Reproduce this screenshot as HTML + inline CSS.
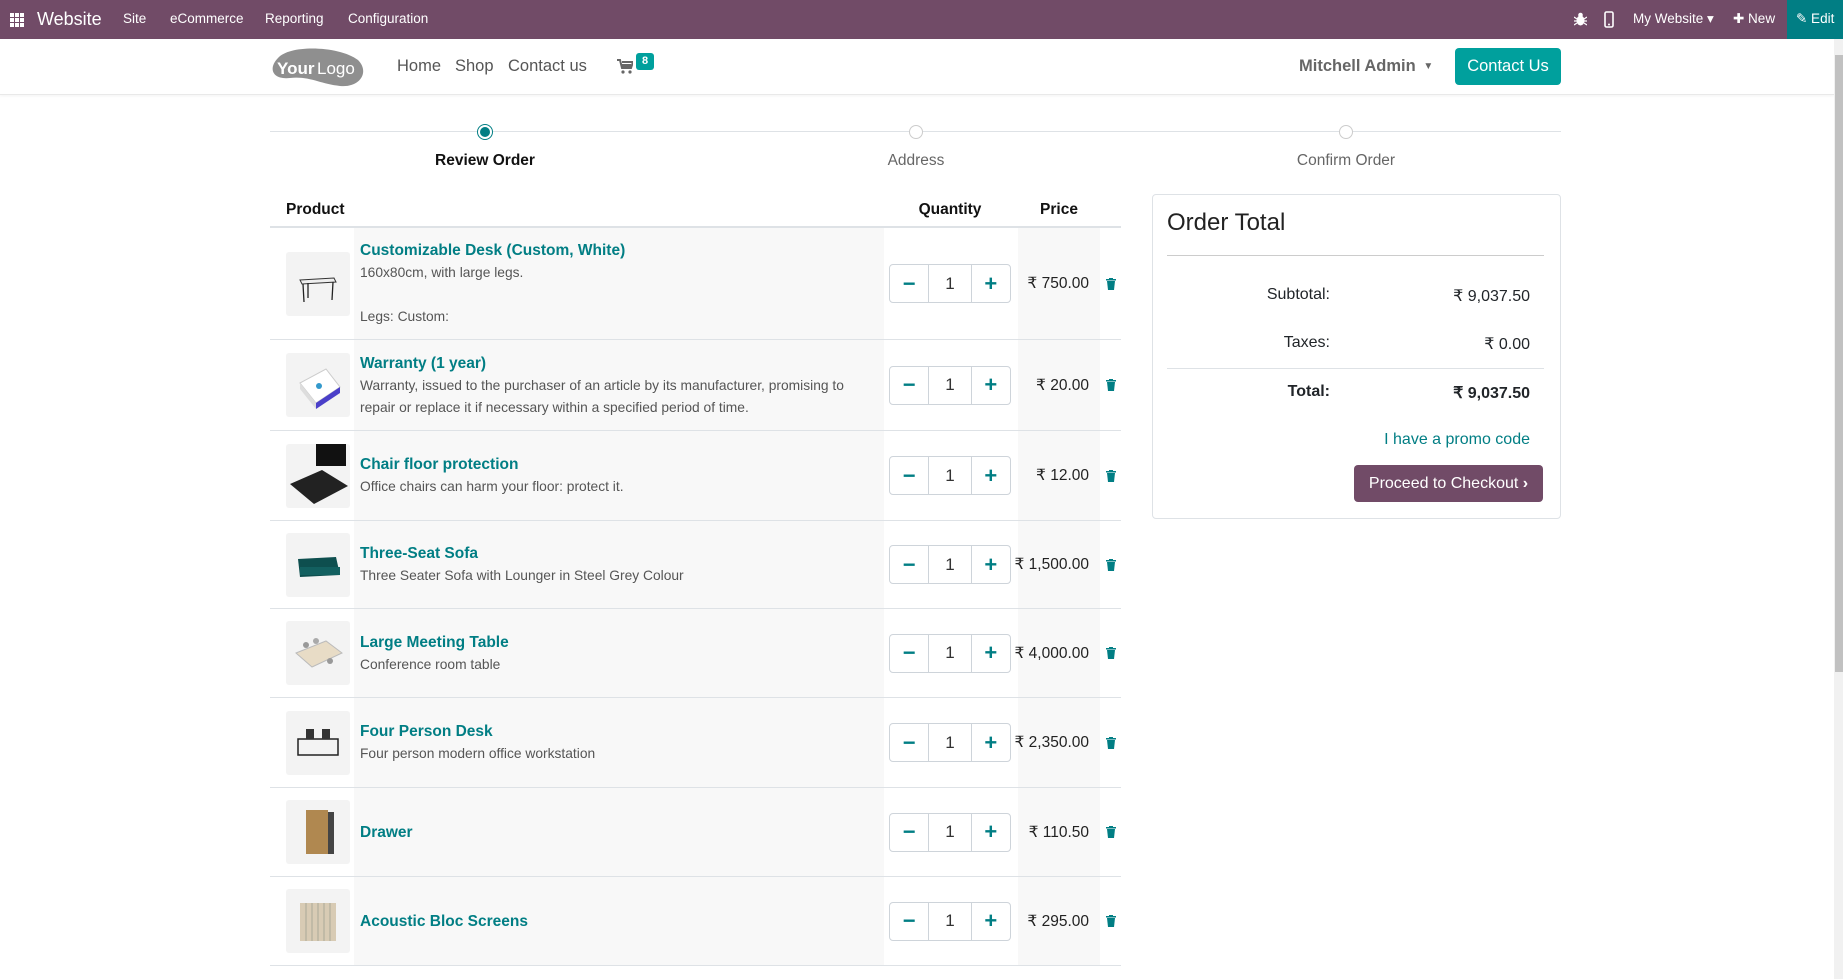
<!DOCTYPE html>
<html><head><meta charset="utf-8">
<style>
*{box-sizing:border-box;margin:0;padding:0}
body{width:1843px;height:979px;overflow:hidden;background:#fff;font-family:"Liberation Sans",Arial,sans-serif;color:#212529;position:relative}
.a{position:absolute}
.top{left:0;top:0;width:1843px;height:39px;background:#714b67;color:#fff}
.top span{position:absolute;top:11px;font-size:13.5px;white-space:nowrap}
.row{position:absolute;left:270px;width:851px;border-bottom:1px solid #dee2e6;display:flex;align-items:center}
.gp{position:absolute;left:84px;width:530px;top:0;bottom:0;background:#f8f8f8}
.gq{position:absolute;left:748px;width:82px;top:0;bottom:0;background:#f8f8f8}
.img{position:absolute;left:16px;width:64px;height:64px;background:#f3f3f3;border-radius:3px;overflow:hidden}
.txt{position:absolute;left:90px;width:520px}
.nm{color:#017e84;font-weight:bold;font-size:15.5px;line-height:23px}
.ds{color:#555;font-size:13.8px;line-height:22px}
.qty{position:absolute;left:619px;width:122px;height:39px;border:1px solid #ced4da;border-radius:4px;display:flex;background:#fff}
.qty div{display:flex;align-items:center;justify-content:center;font-size:17px}
.qty .b{width:39px;color:#017e84;font-weight:bold;font-size:22px}
.qty .v{width:44px;border-left:1px solid #ced4da;border-right:1px solid #ced4da;color:#333}
.pr{position:absolute;right:32px;font-size:15.5px;color:#222}
.tr{position:absolute;left:836px;width:10px;height:12px}
</style></head><body>
<div class="a top">
  <svg class="a" style="left:10px;top:13px" width="14" height="14" viewBox="0 0 14 14" fill="#fff"><rect x="0" y="0" width="4" height="4"/><rect x="5" y="0" width="4" height="4"/><rect x="10" y="0" width="4" height="4"/><rect x="0" y="5" width="4" height="4"/><rect x="5" y="5" width="4" height="4"/><rect x="10" y="5" width="4" height="4"/><rect x="0" y="10" width="4" height="4"/><rect x="5" y="10" width="4" height="4"/><rect x="10" y="10" width="4" height="4"/></svg>
  <span style="left:37px;top:9px;font-size:18px">Website</span>
  <span style="left:123px">Site</span>
  <span style="left:170px">eCommerce</span>
  <span style="left:265px">Reporting</span>
  <span style="left:348px">Configuration</span>
  <svg class="a" style="left:1574px;top:12px" width="13" height="14" viewBox="0 0 13 14" fill="#fff"><ellipse cx="6.5" cy="8.5" rx="4" ry="5"/><circle cx="6.5" cy="3" r="2.3"/><path d="M0 5l3 2M13 5l-3 2M0 9h3M13 9h-3M0 13l3-2M13 13l-3-2" stroke="#fff" stroke-width="1.2"/></svg>
  <svg class="a" style="left:1604px;top:11px" width="10" height="17" viewBox="0 0 10 17"><rect x="1" y="1" width="8" height="15" rx="1.5" fill="none" stroke="#fff" stroke-width="1.6"/><circle cx="5" cy="13.5" r="1" fill="#fff"/></svg>
  <span style="left:1633px">My Website ▾</span>
  <span style="left:1733px">✚ New</span>
  <div class="a" style="left:1787px;top:0;width:56px;height:39px;background:#017e84"></div>
  <span style="left:1796px">✎ Edit</span>
</div>
<div class="a" style="left:0;top:39px;width:1834px;height:56px;border-bottom:1px solid #e9e9e9;box-shadow:0 1px 3px rgba(0,0,0,.05)"></div>
<svg class="a" style="left:270px;top:46px" width="96" height="42" viewBox="0 0 96 42"><path d="M8 12 C20 -2 70 0 88 14 C100 26 90 42 70 40 C50 38 40 30 20 32 C2 34 -2 22 8 12Z" fill="#8f8f8f"/><text x="7" y="28" font-family="Liberation Sans" font-weight="bold" font-size="17" fill="#fff">Your</text><text x="47" y="28" font-family="Liberation Sans" font-size="17" fill="#fff">Logo</text></svg>
<div class="a" style="left:397px;top:57px;font-size:16.5px;color:#555">Home</div>
<div class="a" style="left:455px;top:57px;font-size:16.5px;color:#555">Shop</div>
<div class="a" style="left:508px;top:57px;font-size:16.5px;color:#555">Contact us</div>
<svg class="a" style="left:617px;top:59px" width="16" height="15" viewBox="0 0 16 15" fill="#666"><path d="M0 1h3l2 8h9l2-6H5" stroke="#666" stroke-width="2" fill="none"/><rect x="4" y="5" width="10" height="4"/><circle cx="6" cy="13" r="1.6"/><circle cx="13" cy="13" r="1.6"/></svg>
<div class="a" style="left:636px;top:53px;width:18px;height:17px;background:#00a09d;border-radius:3px;color:#fff;font-size:11px;font-weight:bold;text-align:center;line-height:17px">8</div>
<div class="a" style="left:1299px;top:57px;font-size:16.5px;color:#666;font-weight:bold">Mitchell Admin <span style="font-size:10px;position:relative;top:-2px;margin-left:3px">▼</span></div>
<div class="a" style="left:1455px;top:48px;width:106px;height:37px;background:#00a09d;border-radius:4px;color:#fff;font-size:16.5px;text-align:center;line-height:37px">Contact Us</div>
<div class="a" style="left:1834px;top:39px;width:9px;height:940px;background:#f1f1f1"></div>
<div class="a" style="left:1835px;top:55px;width:8px;height:617px;background:#c1c1c1"></div>

<div class="a" style="left:270px;top:131px;width:1291px;height:1px;background:#dee2e6"></div>
<div class="a" style="left:477px;top:124px;width:16px;height:16px;border-radius:50%;border:1px solid #017e84;background:#fff"></div>
<div class="a" style="left:480px;top:127px;width:10px;height:10px;border-radius:50%;background:#017e84"></div>
<div class="a" style="left:909px;top:125px;width:14px;height:14px;border-radius:50%;border:1px solid #ccc;background:#fff"></div>
<div class="a" style="left:1339px;top:125px;width:14px;height:14px;border-radius:50%;border:1px solid #ccc;background:#fff"></div>
<div class="a" style="left:385px;top:152px;width:200px;text-align:center;font-size:15.5px;font-weight:bold;color:#111">Review Order</div>
<div class="a" style="left:816px;top:152px;width:200px;text-align:center;font-size:15.5px;color:#666">Address</div>
<div class="a" style="left:1246px;top:152px;width:200px;text-align:center;font-size:15.5px;color:#666">Confirm Order</div>

<div class="a" style="left:286px;top:201px;font-size:15.5px;font-weight:bold;color:#111">Product</div>
<div class="a" style="left:900px;top:201px;width:100px;text-align:center;font-size:15.5px;font-weight:bold;color:#111">Quantity</div>
<div class="a" style="left:1018px;top:201px;width:82px;text-align:center;font-size:15.5px;font-weight:bold;color:#111">Price</div>
<div class="a" style="left:270px;top:226px;width:851px;height:2px;background:#dee2e6"></div>

<div class="row" style="top:228px;height:112px"><div class="gp"></div><div class="gq"></div><div class="img"><svg width="64" height="64"><path d="M14 28 L48 26 L50 30 L16 32Z" fill="#eee" stroke="#333"/><path d="M17 32 L18 50 M47 30 L46 48 M22 31 L22 46" stroke="#222" stroke-width="1.3"/></svg></div>
<div class="txt"><div class="nm">Customizable Desk (Custom, White)</div><div class="ds">160x80cm, with large legs.</div><div class="ds">&nbsp;</div><div class="ds">Legs: Custom:</div></div>
<div class="qty"><div class="b">−</div><div class="v">1</div><div class="b">+</div></div><div class="pr">₹ 750.00</div><svg class="tr" viewBox="0 0 10 12" fill="#017e84"><rect x="0" y="1" width="10" height="1.5"/><rect x="3" y="0" width="4" height="1.5"/><path d="M1 3h8l-1 9H2z"/></svg></div>

<div class="row" style="top:340px;height:91px"><div class="gp"></div><div class="gq"></div><div class="img"><svg width="64" height="64"><path d="M14 30 L40 16 L54 34 L30 50Z" fill="#fff" stroke="#ccc"/><path d="M30 50 L54 34 L54 40 L30 56Z" fill="#4a3fc9"/><path d="M14 30 L30 50 L30 56 L14 36Z" fill="#ddd"/><circle cx="33" cy="33" r="3" fill="#39c"/></svg></div>
<div class="txt"><div class="nm">Warranty (1 year)</div><div class="ds">Warranty, issued to the purchaser of an article by its manufacturer, promising to<br>repair or replace it if necessary within a specified period of time.</div></div>
<div class="qty"><div class="b">−</div><div class="v">1</div><div class="b">+</div></div><div class="pr">₹ 20.00</div><svg class="tr" viewBox="0 0 10 12" fill="#017e84"><rect x="0" y="1" width="10" height="1.5"/><rect x="3" y="0" width="4" height="1.5"/><path d="M1 3h8l-1 9H2z"/></svg></div>

<div class="row" style="top:431px;height:90px"><div class="gp"></div><div class="gq"></div><div class="img"><svg width="64" height="64"><path d="M4 40 L36 26 L62 42 L28 60Z" fill="#222"/><rect x="30" y="0" width="30" height="22" fill="#111"/></svg></div>
<div class="txt"><div class="nm">Chair floor protection</div><div class="ds">Office chairs can harm your floor: protect it.</div></div>
<div class="qty"><div class="b">−</div><div class="v">1</div><div class="b">+</div></div><div class="pr">₹ 12.00</div><svg class="tr" viewBox="0 0 10 12" fill="#017e84"><rect x="0" y="1" width="10" height="1.5"/><rect x="3" y="0" width="4" height="1.5"/><path d="M1 3h8l-1 9H2z"/></svg></div>

<div class="row" style="top:521px;height:88px"><div class="gp"></div><div class="gq"></div><div class="img"><svg width="64" height="64"><path d="M12 26 L50 24 L54 42 L14 44Z" fill="#0e4f4f"/><rect x="14" y="34" width="40" height="8" fill="#136060"/></svg></div>
<div class="txt"><div class="nm">Three-Seat Sofa</div><div class="ds">Three Seater Sofa with Lounger in Steel Grey Colour</div></div>
<div class="qty"><div class="b">−</div><div class="v">1</div><div class="b">+</div></div><div class="pr">₹ 1,500.00</div><svg class="tr" viewBox="0 0 10 12" fill="#017e84"><rect x="0" y="1" width="10" height="1.5"/><rect x="3" y="0" width="4" height="1.5"/><path d="M1 3h8l-1 9H2z"/></svg></div>

<div class="row" style="top:609px;height:89px"><div class="gp"></div><div class="gq"></div><div class="img"><svg width="64" height="64"><path d="M10 32 L40 20 L56 32 L26 46Z" fill="#e8dcc6" stroke="#bbb"/><circle cx="20" cy="24" r="3" fill="#999"/><circle cx="44" cy="40" r="3" fill="#999"/><circle cx="30" cy="20" r="3" fill="#aaa"/></svg></div>
<div class="txt"><div class="nm">Large Meeting Table</div><div class="ds">Conference room table</div></div>
<div class="qty"><div class="b">−</div><div class="v">1</div><div class="b">+</div></div><div class="pr">₹ 4,000.00</div><svg class="tr" viewBox="0 0 10 12" fill="#017e84"><rect x="0" y="1" width="10" height="1.5"/><rect x="3" y="0" width="4" height="1.5"/><path d="M1 3h8l-1 9H2z"/></svg></div>

<div class="row" style="top:698px;height:90px"><div class="gp"></div><div class="gq"></div><div class="img"><svg width="64" height="64"><rect x="12" y="28" width="40" height="16" fill="none" stroke="#222" stroke-width="1.5"/><rect x="20" y="18" width="8" height="10" fill="#333"/><rect x="36" y="18" width="8" height="10" fill="#333"/></svg></div>
<div class="txt"><div class="nm">Four Person Desk</div><div class="ds">Four person modern office workstation</div></div>
<div class="qty"><div class="b">−</div><div class="v">1</div><div class="b">+</div></div><div class="pr">₹ 2,350.00</div><svg class="tr" viewBox="0 0 10 12" fill="#017e84"><rect x="0" y="1" width="10" height="1.5"/><rect x="3" y="0" width="4" height="1.5"/><path d="M1 3h8l-1 9H2z"/></svg></div>

<div class="row" style="top:788px;height:89px"><div class="gp"></div><div class="gq"></div><div class="img"><svg width="64" height="64"><rect x="20" y="10" width="22" height="44" fill="#b08850"/><rect x="42" y="12" width="6" height="42" fill="#444"/></svg></div>
<div class="txt"><div class="nm">Drawer</div></div>
<div class="qty"><div class="b">−</div><div class="v">1</div><div class="b">+</div></div><div class="pr">₹ 110.50</div><svg class="tr" viewBox="0 0 10 12" fill="#017e84"><rect x="0" y="1" width="10" height="1.5"/><rect x="3" y="0" width="4" height="1.5"/><path d="M1 3h8l-1 9H2z"/></svg></div>

<div class="row" style="top:877px;height:89px"><div class="gp"></div><div class="gq"></div><div class="img"><svg width="64" height="64"><rect x="14" y="14" width="36" height="38" fill="#d8cbb4"/><path d="M20 14v38M26 14v38M32 14v38M38 14v38M44 14v38" stroke="#aa9"/></svg></div>
<div class="txt"><div class="nm">Acoustic Bloc Screens</div></div>
<div class="qty"><div class="b">−</div><div class="v">1</div><div class="b">+</div></div><div class="pr">₹ 295.00</div><svg class="tr" viewBox="0 0 10 12" fill="#017e84"><rect x="0" y="1" width="10" height="1.5"/><rect x="3" y="0" width="4" height="1.5"/><path d="M1 3h8l-1 9H2z"/></svg></div>

<div class="a" style="left:1152px;top:194px;width:409px;height:325px;border:1px solid #dee2e6;border-radius:4px"></div>
<div class="a" style="left:1167px;top:209px;font-size:24px;color:#222">Order Total</div>
<div class="a" style="left:1167px;top:255px;width:377px;height:1px;background:#ccc"></div>
<div class="a" style="left:1200px;top:286px;width:130px;text-align:right;font-size:16px">Subtotal:</div>
<div class="a" style="left:1380px;top:286px;width:150px;text-align:right;font-size:16px">₹ 9,037.50</div>
<div class="a" style="left:1200px;top:334px;width:130px;text-align:right;font-size:16px">Taxes:</div>
<div class="a" style="left:1380px;top:334px;width:150px;text-align:right;font-size:16px">₹ 0.00</div>
<div class="a" style="left:1167px;top:368px;width:377px;height:1px;background:#dee2e6"></div>
<div class="a" style="left:1200px;top:383px;width:130px;text-align:right;font-size:16px;font-weight:bold">Total:</div>
<div class="a" style="left:1380px;top:383px;width:150px;text-align:right;font-size:16px;font-weight:bold">₹ 9,037.50</div>
<div class="a" style="left:1330px;top:431px;width:200px;text-align:right;font-size:16px;color:#017e84">I have a promo code</div>
<div class="a" style="left:1354px;top:465px;width:189px;height:37px;background:#714b67;border-radius:4px;color:#fff;font-size:16px;line-height:37px;text-align:center">Proceed to Checkout <b>›</b></div>
</body></html>
